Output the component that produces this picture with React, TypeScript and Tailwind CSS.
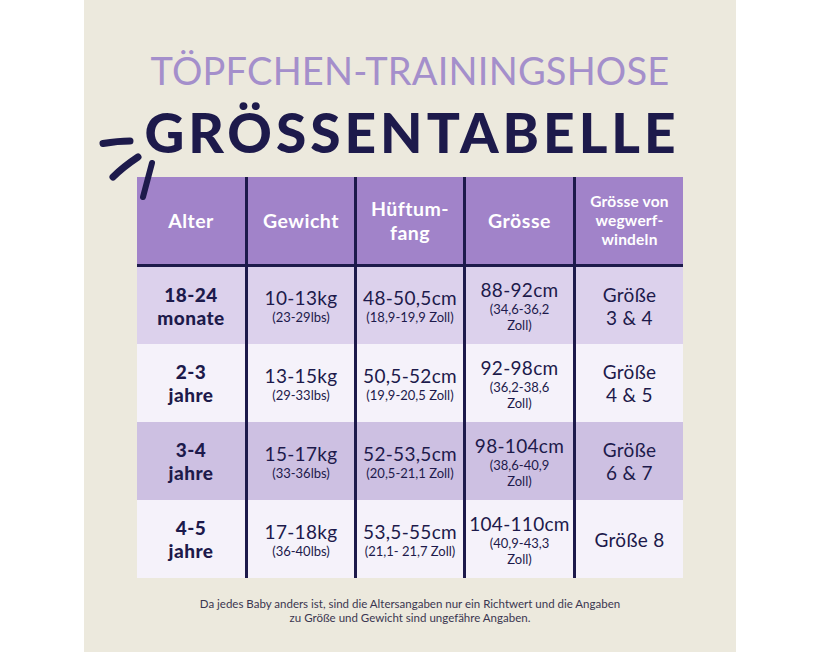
const rows = [
  {
    age: ['18-24', 'monate'],
    weight: ['10-13kg', '(23-29lbs)'],
    hip: ['48-50,5cm', '(18,9-19,9 Zoll)'],
    height: ['88-92cm', '(34,6-36,2', 'Zoll)'],
    diaper: ['Größe', '3 & 4'],
    bg: 'bg-[#dcd1ec]',
  },
  {
    age: ['2-3', 'jahre'],
    weight: ['13-15kg', '(29-33lbs)'],
    hip: ['50,5-52cm', '(19,9-20,5 Zoll)'],
    height: ['92-98cm', '(36,2-38,6', 'Zoll)'],
    diaper: ['Größe', '4 & 5'],
    bg: 'bg-[#f5f2fa]',
  },
  {
    age: ['3-4', 'jahre'],
    weight: ['15-17kg', '(33-36lbs)'],
    hip: ['52-53,5cm', '(20,5-21,1 Zoll)'],
    height: ['98-104cm', '(38,6-40,9', 'Zoll)'],
    diaper: ['Größe', '6 & 7'],
    bg: 'bg-[#cdc0e2]',
  },
  {
    age: ['4-5', 'jahre'],
    weight: ['17-18kg', '(36-40lbs)'],
    hip: ['53,5-55cm', '(21,1- 21,7 Zoll)'],
    height: ['104-110cm', '(40,9-43,3', 'Zoll)'],
    diaper: ['Größe 8'],
    bg: 'bg-[#f5f2fa]',
  },
];

const line = 'border-l-[3px] border-[#1d1a4b]';

function Measure({ main, sub }: { main: string; sub: string[] }) {
  return (
    <div className="flex flex-col items-center text-center">
      <span className="text-[19px] leading-[23px] tracking-[0.3px]">{main}</span>
      {sub.map((s) => (
        <span key={s} className="text-[13px] leading-[16px]">
          {s}
        </span>
      ))}
    </div>
  );
}

export default function App() {
  return (
    <div className="w-[815px] h-[652px] bg-white font-['Lato',sans-serif]">
      <div className="relative ml-[84px] w-[652px] h-[652px] bg-[#ece9dd] flex flex-col items-center">
        <svg
          className="absolute left-0 top-0 z-10"
          width="90"
          height="210"
          viewBox="0 0 90 210"
          fill="none"
          stroke="#1d1a4b"
          strokeLinecap="round"
        >
          <path d="M19 143.5 C28 142 37 141 46 141" strokeWidth="7" />
          <path d="M54 157 C45 163 36 170 29 177" strokeWidth="7" />
          <path d="M68 163 C65 174 62 186 59 197" strokeWidth="6" />
        </svg>

        <h1 className="mt-[50px] text-[38px] leading-[40px] tracking-[0.2px] text-[#a48fcb] font-normal">
          TÖPFCHEN-TRAININGSHOSE
        </h1>
        <h2 className="mt-[9px] pl-[4px] text-[55px] leading-[66px] tracking-[4px] font-black text-[#1d1a4b]">
          GRÖSSENTABELLE
        </h2>

        <div className="mt-[12px] w-[546px] text-[#1d1a4b]">
          <div className="grid grid-cols-[108px_109px_109px_110px_110px] h-[90px] bg-[#a183c9] border-b-[3px] border-[#1d1a4b] text-white font-bold text-center tracking-[0.5px]">
            <div className="flex items-center justify-center text-[19.5px]">Alter</div>
            <div className={`flex items-center justify-center text-[19.5px] ${line}`}>Gewicht</div>
            <div className={`flex items-center justify-center text-[19.5px] leading-[24px] ${line}`}>
              Hüftum-
              <br />
              fang
            </div>
            <div className={`flex items-center justify-center text-[19.5px] ${line}`}>Grösse</div>
            <div className={`flex items-center justify-center text-[15.5px] leading-[19px] tracking-[0.2px] ${line}`}>
              Grösse von
              <br />
              wegwerf-
              <br />
              windeln
            </div>
          </div>

          {rows.map((r, i) => (
            <div
              key={i}
              className={`grid grid-cols-[108px_109px_109px_110px_110px] ${i === 0 ? 'h-[77px]' : 'h-[78px]'} ${r.bg}`}
            >
              <div className="flex flex-col items-center justify-center font-black text-[19px] leading-[23px] tracking-[0.5px]">
                <span>{r.age[0]}</span>
                <span>{r.age[1]}</span>
              </div>
              <div className={`flex items-center justify-center ${line}`}>
                <Measure main={r.weight[0]} sub={r.weight.slice(1)} />
              </div>
              <div className={`flex items-center justify-center ${line}`}>
                <Measure main={r.hip[0]} sub={r.hip.slice(1)} />
              </div>
              <div className={`flex items-center justify-center ${line}`}>
                <Measure main={r.height[0]} sub={r.height.slice(1)} />
              </div>
              <div className={`flex flex-col items-center justify-center text-[19px] leading-[23px] tracking-[0.3px] ${line}`}>
                {r.diaper.map((d) => (
                  <span key={d}>{d}</span>
                ))}
              </div>
            </div>
          ))}
        </div>

        <p className="mt-[19px] text-center text-[11.5px] leading-[14px] text-[#3a3650]">
          Da jedes Baby anders ist, sind die Altersangaben nur ein Richtwert und die Angaben
          <br />
          zu Größe und Gewicht sind ungefähre Angaben.
        </p>
      </div>
    </div>
  );
}
